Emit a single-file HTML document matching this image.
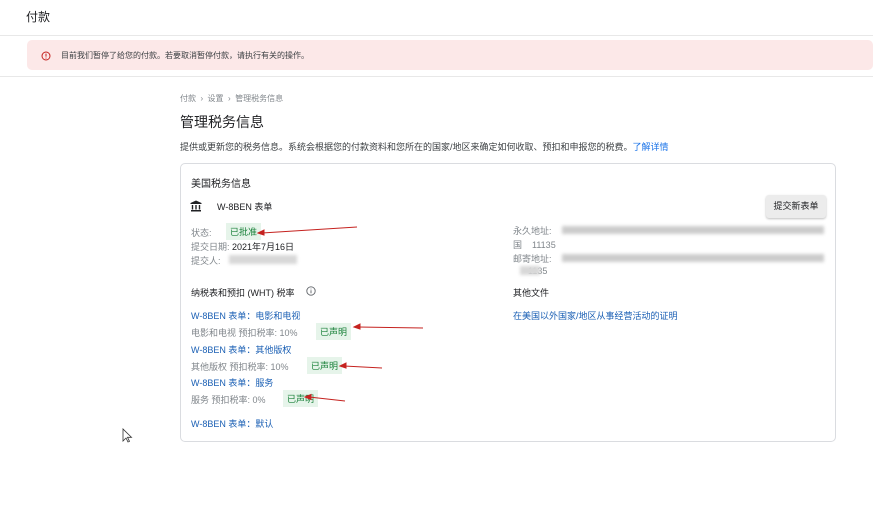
<!DOCTYPE html>
<html><head><meta charset="utf-8"><style>
*{margin:0;padding:0;box-sizing:border-box}
body{width:873px;height:512px;background:#fff;position:relative;overflow:hidden;font-family:"Liberation Sans","Noto Sans CJK SC",sans-serif;color:#3c4043}
.a{position:absolute;white-space:nowrap}
.s{font-size:9px}
.g{color:#80868b}
.l{color:#1a5fb4;font-size:9px}
.b{background:#e6f4ea;color:#188038;font-size:9px;padding:2px 4px}
.bl{position:absolute;background:#d8d8d8;filter:blur(1.5px)}
</style></head><body>
<div class="a" style="left:26px;top:8px;font-size:12px;color:#202124">付款</div>
<div class="a" style="left:0;top:35px;width:873px;height:1px;background:#e8e8e8"></div>
<div class="a" style="left:27px;top:40px;width:846px;height:30px;background:#fce8e8;border-radius:5px"></div>
<svg class="a" style="left:41px;top:51px" width="10" height="10" viewBox="0 0 10 10"><circle cx="5" cy="5" r="4" fill="none" stroke="#c5221f" stroke-width="1"/><path d="M5 2.6v3M5 6.6v.9" stroke="#c5221f" stroke-width="1"/></svg>
<div class="a" style="left:61px;top:50px;font-size:8px;color:#3c4043">目前我们暂停了给您的付款。若要取消暂停付款，请执行有关的操作。</div>
<div class="a" style="left:0;top:76px;width:873px;height:1px;background:#e8e8e8"></div>
<div class="a g" style="left:180px;top:93px;font-size:8px">付款 &nbsp;› &nbsp;设置 &nbsp;› &nbsp;管理税务信息</div>
<div class="a" style="left:180px;top:112px;font-size:14px;color:#202124">管理税务信息</div>
<div class="a" style="left:180px;top:140px;font-size:9px;color:#3c4043">提供或更新您的税务信息。系统会根据您的付款资料和您所在的国家/地区来确定如何收取、预扣和申报您的税费。<span style="color:#1a73e8">了解详情</span></div>
<div class="a" style="left:180px;top:163px;width:656px;height:279px;border:1px solid #dadce0;border-radius:5px"></div>
<div class="a" style="left:191px;top:175px;font-size:10px;color:#202124">美国税务信息</div>
<svg class="a" style="left:190px;top:200px" width="12" height="12" viewBox="0 0 12 12"><path d="M6 0.5L11.5 3V4H0.5V3Z M1 10h10v1.5H1Z" fill="#202124"/><path d="M2.5 5v4.5M6 5v4.5M9.5 5v4.5" stroke="#202124" stroke-width="1.4"/></svg>
<div class="a s" style="left:217px;top:200px;color:#202124">W-8BEN 表单</div>
<div class="a" style="left:766px;top:195px;width:60px;height:23px;background:#ececec;border-radius:3px;box-shadow:0 1px 2px rgba(0,0,0,.25);font-size:9px;text-align:center;line-height:23px;color:#202124">提交新表单</div>
<div class="a s g" style="left:191px;top:226px">状态:</div>
<div class="a b" style="left:226px;top:223px">已批准</div>
<div class="a s g" style="left:191px;top:240px">提交日期: <span style="color:#202124">2021年7月16日</span></div>
<div class="a s g" style="left:191px;top:254px">提交人:</div>
<div class="bl" style="left:229px;top:255px;width:68px;height:9px"></div>
<div class="a s g" style="left:513px;top:224px">永久地址:</div>
<div class="bl" style="left:562px;top:226px;width:262px;height:8px;background:#ccc"></div>
<div class="a s g" style="left:513px;top:238px">国 &nbsp;&nbsp;&nbsp;11135</div>
<div class="a s g" style="left:513px;top:252px">邮寄地址:</div>
<div class="bl" style="left:562px;top:254px;width:262px;height:8px;background:#ccc"></div>
<div class="a s g" style="left:513px;top:266px">&nbsp;&nbsp;&nbsp;&nbsp;&nbsp;&nbsp;1135</div>
<div class="bl" style="left:520px;top:266px;width:20px;height:9px"></div>
<div class="a s" style="left:191px;top:286px;color:#202124">纳税表和预扣 (WHT) 税率</div>
<svg class="a" style="left:306px;top:286px" width="10" height="10" viewBox="0 0 10 10"><circle cx="5" cy="5" r="4.2" fill="none" stroke="#5f6368" stroke-width=".9"/><path d="M5 4.3v3M5 2.6v.8" stroke="#5f6368" stroke-width=".9"/></svg>
<div class="a s" style="left:513px;top:286px;color:#202124">其他文件</div>
<div class="a l" style="left:513px;top:309px">在美国以外国家/地区从事经营活动的证明</div>
<div class="a l" style="left:191px;top:309px">W-8BEN 表单：电影和电视</div>
<div class="a s g" style="left:191px;top:326px">电影和电视 预扣税率: 10%</div>
<div class="a b" style="left:316px;top:323px">已声明</div>
<div class="a l" style="left:191px;top:343px">W-8BEN 表单：其他版权</div>
<div class="a s g" style="left:191px;top:360px">其他版权 预扣税率: 10%</div>
<div class="a b" style="left:307px;top:357px">已声明</div>
<div class="a l" style="left:191px;top:376px">W-8BEN 表单：服务</div>
<div class="a s g" style="left:191px;top:393px">服务 预扣税率: 0%</div>
<div class="a b" style="left:283px;top:390px">已声明</div>
<div class="a l" style="left:191px;top:417px">W-8BEN 表单：默认</div>
<svg class="a" style="left:0;top:0" width="873" height="512"><g stroke="#c5221f" stroke-width="1" fill="#c5221f"><line x1="357" y1="227" x2="262" y2="233"/><path d="M258 233l6-3v5z"/><line x1="423" y1="328" x2="358" y2="327"/><path d="M354 327l6-3v5z"/><line x1="382" y1="368" x2="344" y2="366"/><path d="M340 366l6-3v5z"/><line x1="345" y1="401" x2="309" y2="397"/><path d="M305 397l6-2.5v5z"/></g>
<path d="M123 429v12l3-3 2 4 1.5-.7-2-4h4z" fill="#fff" stroke="#333" stroke-width=".8"/></svg>
</body></html>
